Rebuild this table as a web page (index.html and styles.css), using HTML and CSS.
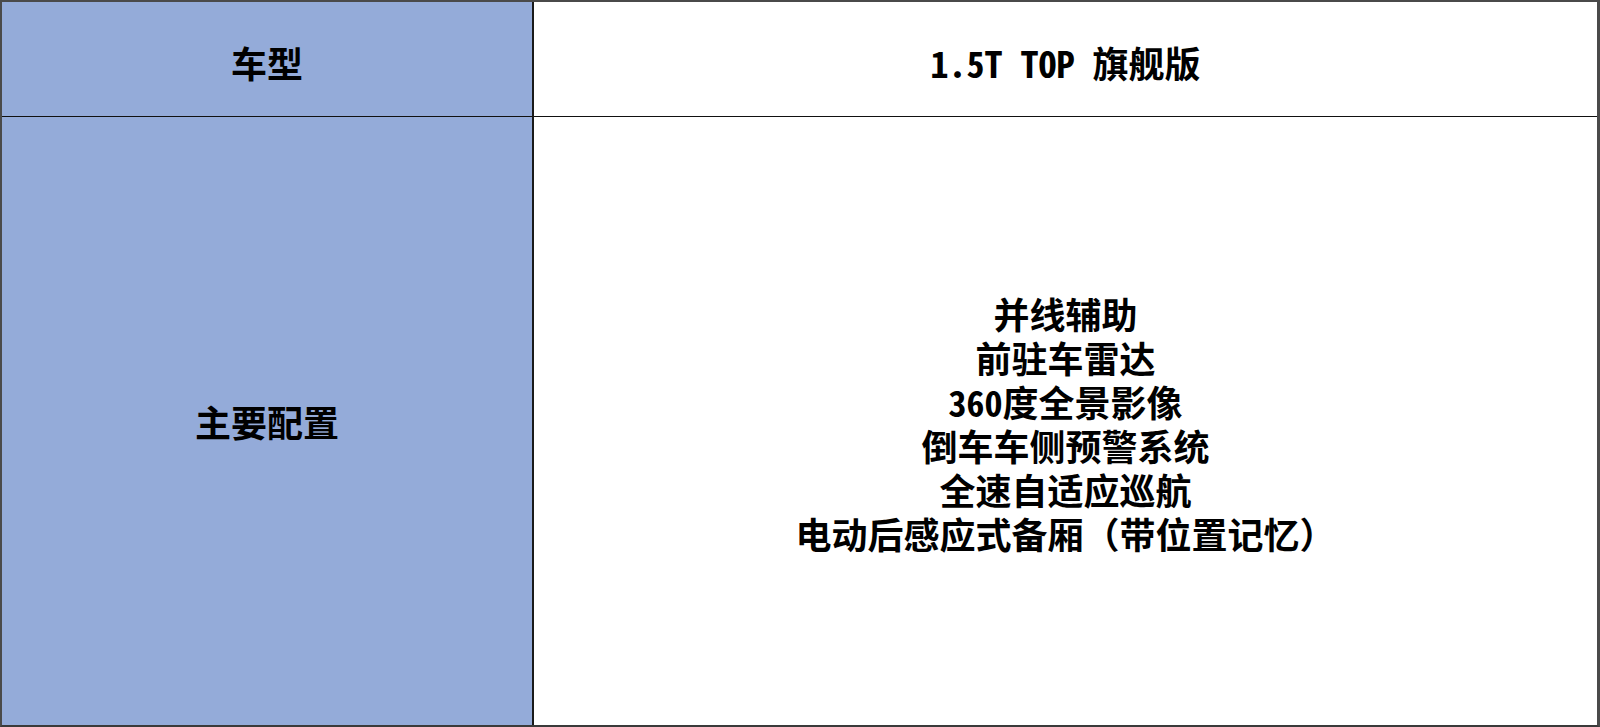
FILE: index.html
```html
<!DOCTYPE html>
<html lang="zh-CN">
<head>
<meta charset="utf-8">
<title>配置表</title>
<link rel="stylesheet" href="styles.css">
</head>
<body>
<div class="table">
  <div class="cell head label">车型</div>
  <div class="cell head value">1.5T TOP 旗舰版</div>
  <div class="cell body label">主要配置</div>
  <div class="cell body value">
    <div class="lines">
      <div>并线辅助</div>
      <div>前驻车雷达</div>
      <div>360度全景影像</div>
      <div>倒车车侧预警系统</div>
      <div>全速自适应巡航</div>
      <div>电动后感应式备厢（带位置记忆）</div>
    </div>
  </div>
</div>
</body>
</html>
```

FILE: styles.css
```css
* { box-sizing: border-box; }
html, body { margin: 0; padding: 0; background: #fff; }
body {
  width: 1600px;
  height: 727px;
  overflow: hidden;
  font-family: "Noto Sans Mono CJK SC", "Noto Sans CJK SC", "DejaVu Sans", sans-serif;
  font-weight: 700;
  color: #000;
}
.table {
  width: 1600px;
  height: 727px;
  display: grid;
  grid-template-columns: 532px 1fr;
  grid-template-rows: 115px 1fr;
  border-top: 2px solid #4a4a4a;
  border-left: 2px solid #4a4a4a;
  border-right: 3px solid #4a4a4a;
  border-bottom: 2px solid #3a3a3a;
}
.cell {
  display: flex;
  align-items: center;
  justify-content: center;
  font-size: 36px;
  line-height: 44px;
  text-align: center;
}
.label {
  background: #94abd9;
  border-right: 2px solid #1a1a1a;
}
.head { border-bottom: 1px solid #111; padding-top: 5px; }
.lines { display: flex; flex-direction: column; align-items: center; padding-top: 4px; }
```
